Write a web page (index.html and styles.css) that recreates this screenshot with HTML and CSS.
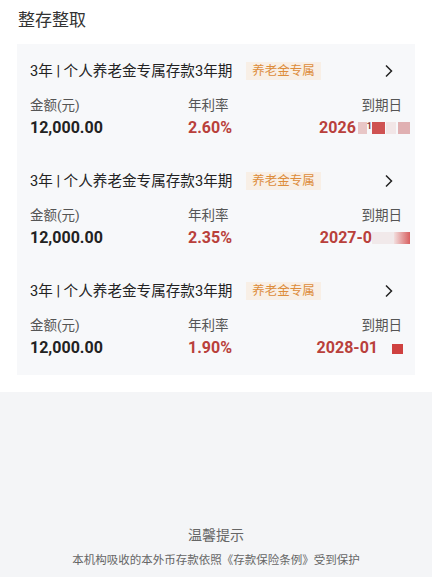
FILE: index.html
```html
<!DOCTYPE html>
<html lang="zh-CN">
<head>
    <meta charset="UTF-8">
    <title>整存整取</title>
    <link rel="stylesheet" href="styles.css">
</head>
<body>
    <div class="page">
        <h1 class="section-title">整存整取</h1>

        <div class="card">
            <div class="deposit">
                <div class="deposit-head">
                    <span class="deposit-name">3年 | 个人养老金专属存款3年期</span>
                    <span class="tag">养老金专属</span>
                    <svg class="chevron" viewBox="0 0 10 14" width="10" height="14">
                        <path d="M2 1.5 L7.5 7 L2 12.5" fill="none" stroke="#222" stroke-width="1.5"/>
                    </svg>
                </div>
                <div class="deposit-grid">
                    <span class="label">金额(元)</span>
                    <span class="label">年利率</span>
                    <span class="label right">到期日</span>
                    <span class="amount">12,000.00</span>
                    <span class="rate">2.60%</span>
                    <span class="date right">2026<i class="mask m1-a"></i><i class="mask-char">1</i><i class="mask m1-b"></i><i class="mask m1-c"></i><i class="mask m1-d"></i></span>
                </div>
            </div>

            <div class="deposit">
                <div class="deposit-head">
                    <span class="deposit-name">3年 | 个人养老金专属存款3年期</span>
                    <span class="tag">养老金专属</span>
                    <svg class="chevron" viewBox="0 0 10 14" width="10" height="14">
                        <path d="M2 1.5 L7.5 7 L2 12.5" fill="none" stroke="#222" stroke-width="1.5"/>
                    </svg>
                </div>
                <div class="deposit-grid">
                    <span class="label">金额(元)</span>
                    <span class="label">年利率</span>
                    <span class="label right">到期日</span>
                    <span class="amount">12,000.00</span>
                    <span class="rate">2.35%</span>
                    <span class="date right">2027-0<i class="mask m2-a"></i><i class="mask m2-b"></i></span>
                </div>
            </div>

            <div class="deposit">
                <div class="deposit-head">
                    <span class="deposit-name">3年 | 个人养老金专属存款3年期</span>
                    <span class="tag">养老金专属</span>
                    <svg class="chevron" viewBox="0 0 10 14" width="10" height="14">
                        <path d="M2 1.5 L7.5 7 L2 12.5" fill="none" stroke="#222" stroke-width="1.5"/>
                    </svg>
                </div>
                <div class="deposit-grid">
                    <span class="label">金额(元)</span>
                    <span class="label">年利率</span>
                    <span class="label right">到期日</span>
                    <span class="amount">12,000.00</span>
                    <span class="rate">1.90%</span>
                    <span class="date right">2028-01<i class="mask m3-a"></i></span>
                </div>
            </div>
        </div>

        <div class="notice">
            <div class="notice-title">温馨提示</div>
            <div class="notice-text">本机构吸收的本外币存款依照《存款保险条例》受到保护</div>
        </div>
    </div>
</body>
</html>
```

FILE: styles.css
```css
body {
    margin: 0;
    background-color: #ffffff;
    font-family: Roboto, "Noto Sans CJK SC", sans-serif;
    color: #222;
}

.page {
    display: flex;
    flex-direction: column;
}

.section-title {
    margin: 0;
    padding: 10px 18px 14px;
    font-size: 17px;
    line-height: 20px;
    font-weight: normal;
    color: #333;
}

.card {
    margin: 0 17px;
    background-color: #f7f8fa;
    padding-bottom: 1px;
}

.deposit {
    height: 110px;
    box-sizing: border-box;
    padding: 17px 13px 0;
}

.deposit-head {
    display: flex;
    align-items: center;
    height: 20px;
}

.deposit-name {
    font-size: 14.6px;
    line-height: 20px;
    color: #222;
}

.tag {
    margin-left: 14px;
    padding: 0 6px;
    height: 18px;
    line-height: 18px;
    font-size: 12.5px;
    color: #dd8c3a;
    background-color: #f8efe6;
}

.chevron {
    margin-left: auto;
    margin-right: 8px;
}

.deposit-grid {
    display: grid;
    grid-template-columns: 158px 1fr 1fr;
    row-gap: 3px;
    margin-top: 14px;
}

.label {
    font-size: 13.5px;
    line-height: 20px;
    color: #555;
}

.right {
    text-align: right;
}

.amount,
.rate,
.date {
    font-size: 16px;
    line-height: 20px;
    font-weight: bold;
}

.amount {
    color: #222;
}

.rate,
.date {
    color: #b9403b;
}

.date {
    white-space: nowrap;
    margin-right: -8px;
}

.mask {
    display: inline-block;
    height: 12px;
    vertical-align: -1px;
}

.mask-char {
    display: inline-block;
    font-style: normal;
    font-size: 9px;
    line-height: 12px;
    vertical-align: 4px;
    color: #8a3a3a;
}

.m1-a { width: 9px; margin-left: 2px; background-color: #e8c6c6; }
.m1-b { width: 13px; background-color: #cf5252; }
.m1-c { width: 10px; background-color: #f2e6e7; margin-left: 1px; }
.m1-d { width: 12px; background-color: #e0b0b2; margin-left: 2px; }

.m2-a { width: 22px; background-color: #f1e9ea; }
.m2-b { width: 16px; background: linear-gradient(to right, #f2dede, #d86060); }

.m3-a { width: 11px; height: 10px; margin-left: 14px; margin-right: 7px; background-color: #cf4140; }

.notice {
    margin-top: 17px;
    min-height: 185px;
    background-color: #f4f5f7;
    padding-top: 133px;
    box-sizing: border-box;
    text-align: center;
    color: #666;
}

.notice-title {
    font-size: 14px;
    line-height: 20px;
}

.notice-text {
    margin-top: 7px;
    font-size: 11.5px;
    line-height: 16px;
}
```
